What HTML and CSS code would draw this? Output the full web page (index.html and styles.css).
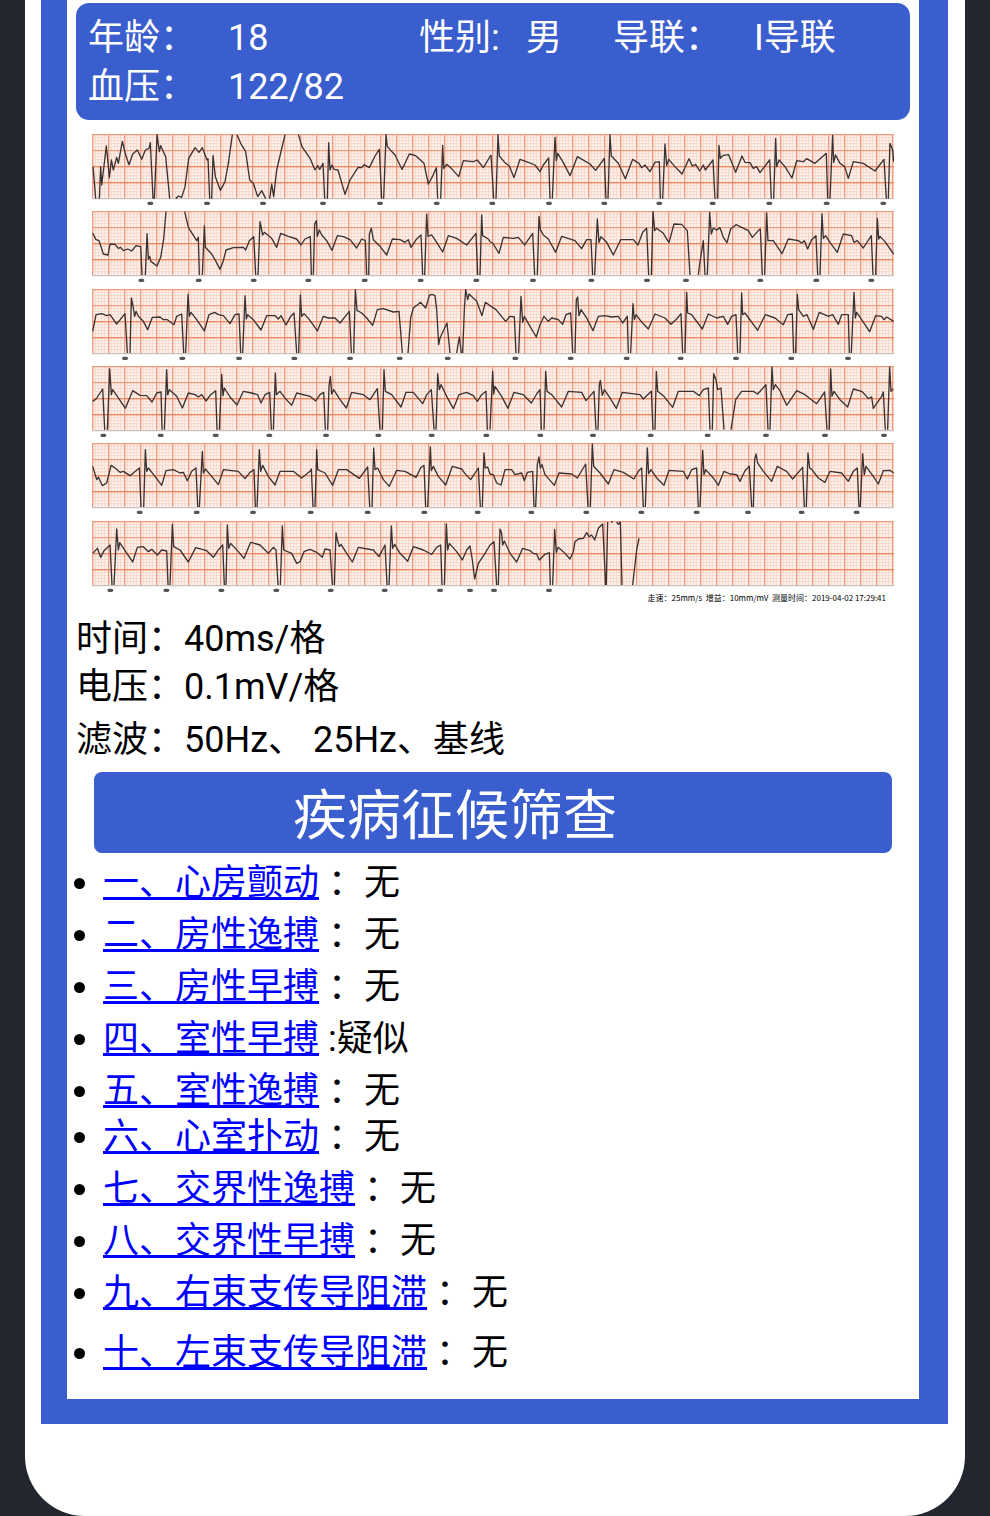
FILE: index.html
```
<!DOCTYPE html>
<html lang="zh-CN">
<head>
    <meta charset="UTF-8">
    <meta name="viewport" content="width=device-width, initial-scale=1.0">
    <title>心电检测报告</title>
    <link rel="stylesheet" href="styles.css">
</head>
<body>
    <main class="phone">
        <div class="report">
            <!-- Patient info -->
            <section class="patient">
                <span>年龄：</span><span>18</span>
                <span>性别:</span><span>男</span>
                <span>导联：</span><span>I导联</span>
                <span>血压：</span><span>122/82</span>
            </section>

            <!-- ECG strips -->
            <figure class="ecg">
                <svg class="strip" viewBox="0 0 2406 232">
                    <defs>
                        <pattern id="grid" width="48" height="48" patternUnits="userSpaceOnUse">
                            <path class="minor" d="M10 0V48M19 0V48M29 0V48M38 0V48M0 10H48M0 19H48M0 29H48M0 38H48"/>
                            <path class="major" d="M2 0V48M0 2H48"/>
                        </pattern>
                        <g id="paper">
                            <rect class="sheet" width="2406" height="194"/>
                            <rect width="2406" height="194" fill="url(#grid)"/>
                            <path class="axis" d="M0 98H2406M0 146H2406"/>
                            <path class="edge" d="M0 194H2406"/>
                        </g>
                    </defs>
                    <use href="#paper"/>
                    <path class="wave" transform="translate(-276 -402)" d="M279 500 287 596M298 596 302 500 305 555 319 438 328 533 334 480 340 510 350 472 355 490 367 424 377 465 387 494 398 462 412 450 425 478 436 450 447 445 451 428 459 596M463 596 471 404 478 455 482 437 497 470 509 596M527 596 535 588 545 592 555 560 566 475 585 443 597 457 607 443 621 480 624 476 629 596M635 596 639 466 646 530 661 571 675 545 685 490 697 404M711 404 722 430 737 455 749 540 760 550 773 590 785 572 797 596M809 596 815 552 821 590 830 510 855 404M895 404 906 440 930 475 945 510 953 497 959 508 969 490 974 596M982 596 986 428 990 510 996 495 1002 508 1014 510 1035 583 1050 540 1074 502 1085 503 1092 494 1108 503 1125 468 1138 448 1145 596M1151 596 1158 404 1162 440 1185 465 1206 508 1215 490 1228 462 1247 467 1272 490 1285 552 1297 530 1309 503 1313 596M1322 596 1328 436 1331 505 1340 493 1352 503 1376 530 1390 482 1420 485 1432 480 1450 503 1473 465"/>
                    <path class="wave" transform="translate(1194 -402)" d="M3 465 11 596M18 596 24 404 28 468 45 488 58 498 72 533 90 478 115 487 135 495 150 515 160 495 176 474 180 596M187 596 195 412 199 482 203 460 220 488 240 527 262 470 300 492 317 511 343 475 348 596M354 596 360 404 364 468 385 490 406 536 428 478 447 490 455 503 465 495 480 515 495 487 508 485 511 596M518 596 525 432 530 497 536 478 555 500 576 522 597 476 607 498 617 493 629 513 640 495 646 510 669 480 675 596M683 596 687 436 691 475 700 466 716 464 737 517 756 468 765 487 780 488 790 505 800 500 810 518 839 480 844 596M851 596 857 415 860 500 867 480 885 500 906 534 920 482 940 485 950 476 975 490 1009 460 1013 596M1020 596 1028 406 1031 487 1037 465 1050 490 1064 500 1075 535 1090 485 1120 490 1155 513 1182 478 1189 596M1195 596 1200 430 1208 450 1211 485"/>
                    <path class="beats" d="M171 208h8M341 208h8M509 208h8M689 208h8M860 208h8M1030 208h8M1197 208h8M1367 208h8M1533 208h8M1698 208h8M1858 208h8M2028 208h8M2200 208h8M2370 208h8"/>
                </svg>
                <svg class="strip" viewBox="0 0 2406 232">
                    <use href="#paper"/>
                    <path class="wave" transform="translate(-36 -36)" d="M38 102 48 122 57 125 70 165 84 168 90 135 105 136 115 148 122 145 130 155 143 150 155 156 168 140 182 143 186 228M196 228 201 104 205 180 209 172 213 188 231 201 242 175 251 120 258 38M314 38 325 85 350 125 355 115 358 228M367 228 373 80 376 145 395 165 405 182 420 211 430 185 438 153 460 146 490 145 497 153 508 125 521 113 527 228M534 228 540 68 548 108 553 100 575 118 590 145 602 103 625 112 650 120 663 138 675 120 691 113 694 228M700 228 704 75 709 65 712 112 718 93 725 108 740 125 756 154 772 110 790 113 810 122 830 147 845 120 856 125 860 228M866 228 868 105 874 88 880 122 900 142 920 168 937 120 960 122 975 130 985 122 993 145 1010 120 1023 108 1028 228M1034 228 1040 45 1044 112 1055 108 1070 130 1088 159 1105 110 1130 118 1160 138 1188 103 1193 228M1200 228 1205 48 1208 110 1225 120 1230 128"/>
                    <path class="wave" transform="translate(1194 -36)" d="M0 128 8 132 27 163 40 115 70 118 85 115 104 138 128 103 134 228M142 228 147 52 151 92 160 108 175 120 197 160 215 112 255 125 275 149 290 122 303 122 308 228M314 228 322 60 327 130 333 113 350 130 370 168 392 122 430 122 444 138 458 100 470 88 476 228M484 228 489 37 494 95 500 88 520 103 537 131 552 75 575 76 592 95 600 228M625 228 629 195 640 125 645 228M652 228 659 40 664 105 670 87 680 93 690 86 700 115 711 131 722 90 738 77 775 95 787 115 808 92 811 90 817 228M824 228 830 42 834 125 850 125 876 164 895 120 925 125 935 132 943 125 953 150 965 122 978 110 983 228M990 228 996 44 1000 118 1007 110 1020 130 1042 160 1060 105 1085 110 1092 130 1102 125 1120 147 1144 110 1149 228M1157 228 1162 58 1166 120 1170 112 1185 128 1211 165"/>
                    <path class="beats" d="M144 208h8M316 208h8M481 208h8M645 208h8M814 208h8M982 208h8M1149 208h8M1319 208h8M1494 208h8M1661 208h8M1778 208h8M2001 208h8M2169 208h8M2334 208h8"/>
                </svg>
                <svg class="strip" viewBox="0 0 2406 232">
                    <use href="#paper"/>
                    <path class="wave" transform="translate(-36 -268)" d="M38 395 48 345 65 342 80 348 90 345 110 373 135 342 142 460M150 460 154 295 160 325 164 350 168 335 175 350 190 365 203 390 217 353 240 352 250 360 262 360 282 375 290 350 305 343 311 460M317 460 324 284 328 350 333 338 350 360 373 394 387 345 404 338 415 345 430 348 450 372 465 345 477 343 482 460M488 460 495 288 499 358 503 345 520 360 543 391 560 348 585 348 595 358 603 348 618 376 632 350 642 340 650 460M656 460 661 286 665 350 672 342 690 362 712 394 730 350 745 355 765 355 780 370 800 345 808 335 814 460M821 460 826 270 831 332 845 340 860 355 878 377 892 330 910 327 940 337 957 335 967 460M984 460 992 355 1000 325 1022 308 1037 325 1048 287 1056 284 1065 288 1070 330 1076 435 1080 415 1101 370 1110 460M1130 460 1138 412 1144 460M1148 460 1153 330 1157 270 1163 300 1167 283 1190 305 1206 348 1216 308 1230 318"/>
                    <path class="wave" transform="translate(1194 -268)" d="M0 318 18 330 47 365 60 350 73 352 78 460M86 460 93 290 98 368 103 350 120 380 139 412 150 375 162 350 175 365 185 355 205 360 218 374 228 345 242 340 248 460M255 460 259 300 263 292 267 348 273 330 290 355 309 393 325 350 345 348 365 352 385 350 398 370 412 350 415 460M422 460 429 312 433 360 438 345 455 367 475 388 495 343 525 355 543 374 560 358 573 342 578 460M585 460 590 278 593 340 605 345 637 388 655 343 680 355 700 350 713 374 725 350 738 345 743 460M750 460 755 280 758 345 765 340 803 392 826 345 855 355 880 375 893 345 907 343 911 460M917 460 922 284 926 330 940 350 951 345 970 389 988 338 1015 350 1028 345 1045 374 1055 345 1075 345 1078 460M1084 460 1092 278 1096 355 1100 338 1115 360 1139 396 1157 348 1175 350 1182 360 1190 352 1211 365"/>
                    <path class="beats" d="M95 208h8M267 208h8M437 208h8M603 208h8M770 208h8M919 208h8M1063 208h8M1266 208h8M1432 208h8M1600 208h8M1762 208h8M1928 208h8M2094 208h8M2264 208h8"/>
                </svg>
                <svg class="strip" viewBox="0 0 2406 232">
                    <use href="#paper"/>
                    <path class="wave" transform="translate(-36 -19)" d="M38 125 48 118 68 88 74 210M82 210 89 28 94 105 98 90 115 115 136 146 158 93 180 107 200 108 216 127 230 100 243 97 246 210M253 210 260 30 263 105 268 90 290 110 307 145 325 100 345 105 355 112 365 105 378 124 392 105 407 93 411 210M418 210 425 44 429 108 433 85 450 112 471 136 490 95 515 100 533 105 543 130 555 105 569 98 574 210M580 210 586 40 589 105 600 95 615 115 635 137 650 100 690 110 707 124 720 105 731 98 736 210M743 210 747 80 751 50 755 103 761 90 780 120 799 145 815 98 850 105 870 120 892 87 900 210M907 210 912 30 916 95 935 105 963 142 978 98 1000 98 1028 132 1040 105 1054 90 1062 210M1068 210 1073 42 1078 90 1083 75 1100 110 1120 147 1137 105 1160 98 1180 108 1192 125 1205 105 1218 95 1222 210"/>
                    <path class="wave" transform="translate(1194 -19)" d="M0 210 8 35 11 103 15 80 35 110 54 146 72 98 100 105 124 130 140 103 150 90 154 210M162 210 167 35 171 95 185 105 215 142 235 95 275 98 288 123 312 95 318 210M324 210 328 75 331 62 337 107 343 90 360 115 379 146 397 98 450 105 460 118 484 95 489 210M495 210 499 35 503 95 520 108 548 143 565 95 610 95 628 108 640 90 655 85 660 210M667 210 671 42 678 60 683 90 693 85 702 210M723 210 737 120 755 95 790 95 803 103 828 75 834 210M840 210 846 22 850 90 856 75 870 93 890 137 920 93 945 105 980 132 1004 97 1011 210M1018 210 1022 28 1026 110 1032 95 1050 120 1073 142 1090 88 1115 95 1125 105 1135 117 1145 112 1150 146 1175 110 1180 97 1186 210M1193 210 1199 22 1203 95 1210 88"/>
                    <path class="beats" d="M30 208h8M202 208h8M367 208h8M528 208h8M698 208h8M855 208h8M1015 208h8M1179 208h8M1341 208h8M1499 208h8M1672 208h8M1843 208h8M2018 208h8M2195 208h8M2372 208h8"/>
                </svg>
                <svg class="strip" viewBox="0 0 2406 232">
                    <use href="#paper"/>
                    <path class="wave" transform="translate(-36 -250)" d="M38 320 50 360 55 352 67 378 80 370 93 317 105 325 120 338 130 335 150 348 178 325 183 442M191 442 196 270 200 335 205 325 225 350 245 377 258 333 280 330 300 340 310 338 322 363 335 335 348 325 353 442M358 442 367 275 370 340 376 328 395 350 415 375 430 330 475 335 495 357 510 338 522 330 526 442M531 442 538 270 542 335 548 317 565 350 585 376 600 335 640 335 665 355 690 335 694 328 699 442M705 442 710 270 713 330 735 340 758 377 775 330 800 330 838 356 863 322 869 442M876 442 881 265 885 330 893 325 910 360 928 380 950 332 975 335 1008 353 1022 325 1032 317 1037 442M1043 442 1051 262 1054 333 1060 320 1075 350 1097 376 1117 320 1145 328 1155 342 1172 360 1195 325 1201 442M1207 442 1212 280 1216 325 1223 322 1230 343"/>
                    <path class="wave" transform="translate(1194 -250)" d="M0 343 10 345 20 370 33 376 45 330 65 330 75 345 95 340 103 363 112 338 128 335 132 442M137 442 142 315 147 292 151 325 156 315 165 345 193 377 207 340 245 343 262 355 287 313 294 442M301 442 307 253 311 320 330 340 355 373 372 330 400 338 432 358 445 335 455 325 460 442M466 442 472 265 476 342 483 330 500 355 522 377 537 332 580 335 592 358 605 330 620 325 625 442M630 442 638 272 642 345 647 330 670 355 685 377 702 335 720 343 740 345 750 365 765 333 778 320 785 442M790 442 794 300 798 283 803 310 820 335 845 365 862 320 890 335 908 358 938 323 943 442M949 442 954 280 959 325 966 330 985 355 1005 368 1020 335 1055 340 1075 365 1090 335 1102 325 1107 442M1111 442 1118 282 1123 345 1128 320 1150 350 1165 373 1180 333 1200 332 1211 340"/>
                    <path class="beats" d="M139 208h8M310 208h8M479 208h8M652 208h8M823 208h8M993 208h8M1153 208h8M1314 208h8M1479 208h8M1644 208h8M1810 208h8M1964 208h8M2125 208h8M2290 208h8"/>
                </svg>
                <svg class="strip" viewBox="0 0 2406 232">
                    <use href="#paper"/>
                    <path class="wave" transform="translate(-36 -483)" d="M38 580 52 565 62 592 72 572 90 555 96 675M102 675 110 507 115 570 119 548 135 572 158 606 172 562 190 560 205 575 215 568 232 585 245 570 260 573 264 675M270 675 277 493 281 560 300 570 325 606 347 563 380 572 400 592 415 570 428 555 433 675M438 675 442 495 446 565 452 550 475 575 492 595 512 547 540 555 565 580 580 562 588 570 594 675M601 675 607 498 611 570 635 580 650 610 660 605 672 575 690 568 710 577 727 592 735 567 750 570 757 675M763 675 768 518 772 540 778 560 783 553 800 580 817 606 835 562 880 570 897 590 915 555 921 675M927 675 934 498 938 565 944 553 960 580 983 604 1000 560 1030 570 1055 583 1070 562 1082 555 1086 675M1093 675 1099 492 1103 570 1108 550 1130 575 1147 600 1160 570 1170 558 1177 600 1184 657 1195 610 1215 580 1230 555"/>
                    <path class="wave" transform="translate(1194 -483)" d="M0 555 12 545 20 675M25 675 30 507 35 520 38 555 43 543 60 580 80 606 98 565 120 572 130 580 140 582 148 600 165 583 178 578 181 675M188 675 194 508 199 578 204 562 220 575 240 597 250 575 255 545 265 537 280 535 290 518 297 530 305 525 314 540 325 505 338 492 347 675M349 675 353 486M363 486H368M380 486 385 493 391 486 396 675M428 675 440 570 447 535"/>
                    <path class="beats" d="M51 208h8M219 208h8M384 208h8M549 208h8M712 208h8M874 208h8M1040 208h8M1130 208h8M1202 208h8M1367 208h8"/>
                </svg>
                <figcaption>走速：25mm/s  增益：10mm/mV  测量时间：2019-04-02 17:29:41</figcaption>
            </figure>

            <!-- Recording settings -->
            <section class="settings">
                <p>时间：40ms/格</p>
                <p>电压：0.1mV/格</p>
                <p class="filter">滤波：50Hz、 25Hz、基线</p>
            </section>

            <!-- Screening results -->
            <h1>疾病征候筛查</h1>
            <ul class="results">
                <li><a href="#">一、心房颤动</a> ：无</li>
                <li><a href="#">二、房性逸搏</a> ：无</li>
                <li><a href="#">三、房性早搏</a> ：无</li>
                <li><a href="#">四、室性早搏</a> :疑似</li>
                <li><a href="#">五、室性逸搏</a> ：无</li>
                <li class="close"><a href="#">六、心室扑动</a> ：无</li>
                <li><a href="#">七、交界性逸搏</a> ：无</li>
                <li><a href="#">八、交界性早搏</a> ：无</li>
                <li><a href="#">九、右束支传导阻滞</a> ：无</li>
                <li class="apart"><a href="#">十、左束支传导阻滞</a> ：无</li>
            </ul>
        </div>
    </main>
</body>
</html>
```
FILE: styles.css
```
* {
    box-sizing: border-box;
}

body {
    margin: 0;
    background-color: #23262e;
    color: #000;
    font-family: Roboto, "Noto Sans CJK SC", sans-serif;
    font-size: 36px;
    font-weight: 400;
}

.phone {
    min-height: 100vh;
    margin: 0 25px;
    padding: 0 17px 92px 16px;
    background-color: #fff;
    border-radius: 0 0 60px 60px;
}

.report {
    padding: 3px 0 20px;
    border: solid #3a5ecd;
    border-width: 0 29px 25px 26px;
}

.patient {
    display: grid;
    grid-template-columns: 140px 191px 107px 87px 141px 1fr;
    margin: 0 9px;
    padding: 11px 12px 8px;
    background-color: #3a5ecd;
    border-radius: 13px;
    color: #fff;
    line-height: 49px;
}

/* ECG */
.ecg {
    margin: 14px 25px 0;
}

.strip {
    display: block;
    width: 100%;
}

.sheet {
    fill: #fdf3ed;
}

.minor {
    stroke: #f5d8cc;
    stroke-width: 3;
}

.major {
    stroke: #ef9a7c;
    stroke-width: 4;
}

.axis {
    stroke: #ee8863;
    stroke-width: 4;
}

.edge {
    stroke: #c9c0bd;
    stroke-width: 4;
}

.wave {
    fill: none;
    stroke: #3a3232;
    stroke-width: 4;
    stroke-linejoin: round;
}

.beats {
    stroke: #555;
    stroke-width: 10;
    stroke-linecap: round;
}

figcaption {
    margin-top: -6px;
    padding-right: 8px;
    font-family: "Noto Sans CJK SC", sans-serif;
    font-size: 8px;
    line-height: 12px;
    text-align: right;
    white-space: pre;
}

/* Settings */
.settings {
    padding: 11px 9px 0;
    line-height: 48px;
}

.settings p {
    margin: 0;
}

.settings .filter {
    margin-top: 5px;
}

h1 {
    margin: 8px 27px 4px;
    padding: 9px 0 0 199px;
    background-color: #3a5ecd;
    border-radius: 8px;
    color: #fff;
    font-size: 54px;
    font-weight: 400;
    line-height: 72px;
}

/* Results */
.results {
    margin: 0;
    padding: 0 0 0 36px;
    line-height: 52px;
}

.results a {
    color: #00f;
    text-decoration: underline;
    text-decoration-skip-ink: none;
    text-decoration-thickness: 3px;
}

.close {
    margin-top: -6px;
}

.apart {
    margin-top: 8px;
}

@media (max-width: 900px) {
    .patient {
        grid-template-columns: repeat(4, auto);
    }

    h1 {
        padding-left: 0;
        text-align: center;
    }
}
```
